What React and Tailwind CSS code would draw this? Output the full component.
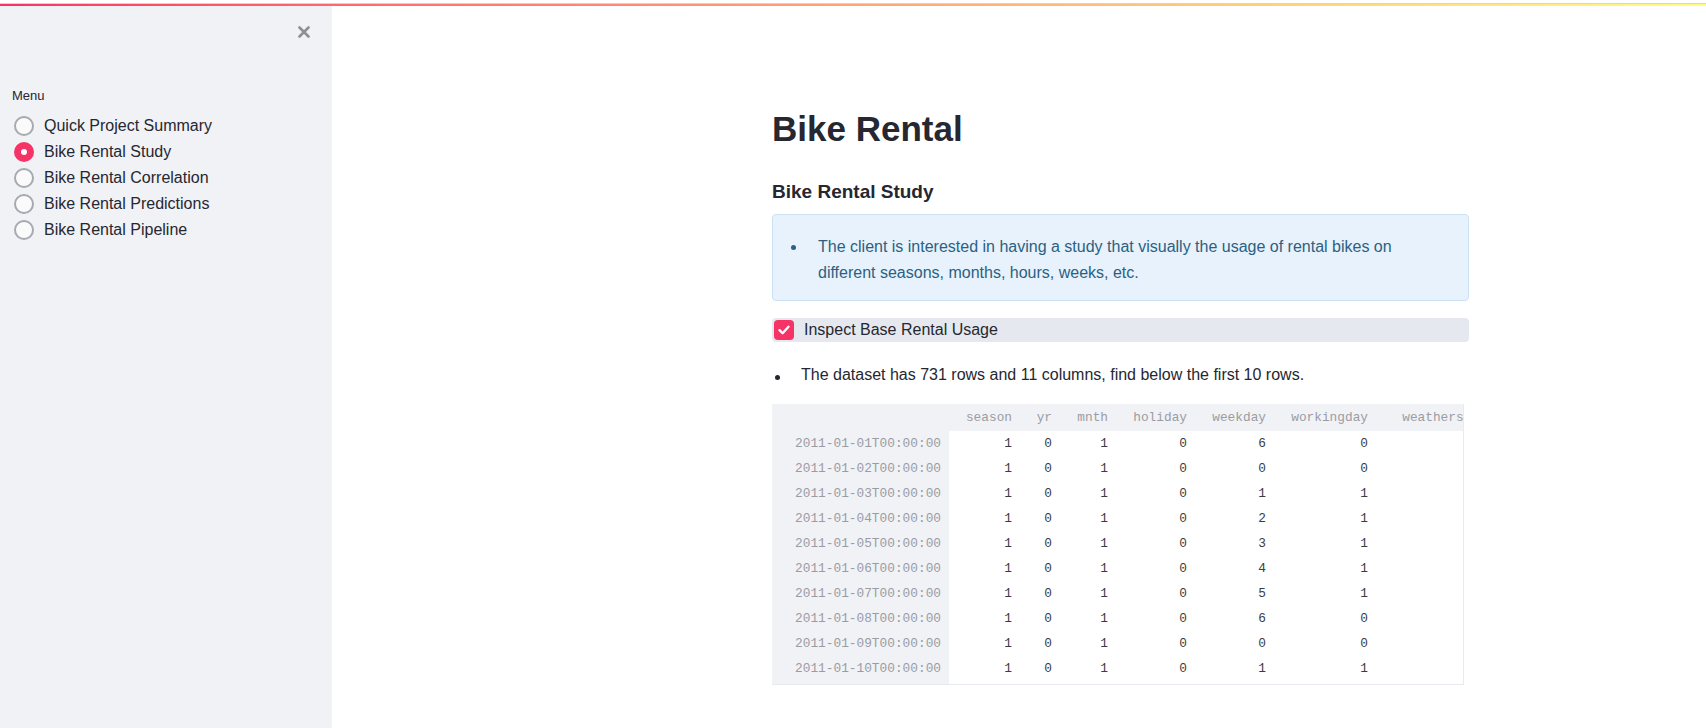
import React from "react";

const rows = [
  ["2011-01-01T00:00:00", 1, 0, 1, 0, 6, 0],
  ["2011-01-02T00:00:00", 1, 0, 1, 0, 0, 0],
  ["2011-01-03T00:00:00", 1, 0, 1, 0, 1, 1],
  ["2011-01-04T00:00:00", 1, 0, 1, 0, 2, 1],
  ["2011-01-05T00:00:00", 1, 0, 1, 0, 3, 1],
  ["2011-01-06T00:00:00", 1, 0, 1, 0, 4, 1],
  ["2011-01-07T00:00:00", 1, 0, 1, 0, 5, 1],
  ["2011-01-08T00:00:00", 1, 0, 1, 0, 6, 0],
  ["2011-01-09T00:00:00", 1, 0, 1, 0, 0, 0],
  ["2011-01-10T00:00:00", 1, 0, 1, 0, 1, 1],
];

const cols = [
  { name: "season", w: "w-[71px]" },
  { name: "yr", w: "w-[40px]" },
  { name: "mnth", w: "w-[56px]" },
  { name: "holiday", w: "w-[79px]" },
  { name: "weekday", w: "w-[79px]" },
  { name: "workingday", w: "w-[102px]" },
  { name: "weathersit", w: "w-[111px]" },
];

const menu = [
  "Quick Project Summary",
  "Bike Rental Study",
  "Bike Rental Correlation",
  "Bike Rental Predictions",
  "Bike Rental Pipeline",
];

function Radio({ checked }) {
  if (checked) {
    return (
      <span className="flex h-[20px] w-[20px] shrink-0 items-center justify-center rounded-full bg-[#f63366]">
        <span className="h-[6px] w-[6px] rounded-full bg-white" />
      </span>
    );
  }
  return (
    <span className="h-[20px] w-[20px] shrink-0 rounded-full border-2 border-[#a6a9b0] bg-[#fafafb]" />
  );
}

export default function App() {
  return (
    <div className="flex h-[728px] w-full flex-col overflow-hidden bg-white font-['Liberation_Sans',Arial,sans-serif] text-[#262730]">
      <div className="h-[3px] bg-white" />
      <div className="h-px bg-[#d4d4d6]" />
      <div className="h-[2px] bg-gradient-to-r from-[#f63366] to-[#fffd80]" />
      <div className="flex min-h-0 flex-1">
        <aside className="w-[332px] shrink-0 bg-[#f0f2f6]">
          <div className="flex justify-end pr-[22px] pt-[20px]">
            <svg width="12" height="12" viewBox="0 0 12 12">
              <path d="M1.5 1.5 L10.5 10.5 M10.5 1.5 L1.5 10.5" stroke="#8c8f96" strokeWidth="2.6" strokeLinecap="round" />
            </svg>
          </div>
          <div className="mt-[50px] pl-[12px] text-[13px] leading-[16px]">Menu</div>
          <div className="mt-[9.5px] flex flex-col">
            {menu.map((m, i) => (
              <div key={m} className="flex h-[25.8px] items-center pl-[14px]">
                <Radio checked={i === 1} />
                <span className="ml-[10px] text-[16px] leading-[20px]">{m}</span>
              </div>
            ))}
          </div>
        </aside>
        <main className="flex-1 pl-[440px] pt-[102px]">
          <div className="w-[697px]">
            <h1 className="text-[35px] font-bold leading-[42px]">Bike Rental</h1>
            <h3 className="mt-[29.5px] text-[19px] font-bold leading-[24px]">Bike Rental Study</h3>
            <div className="mt-[10.5px] rounded-[4px] border border-[#cbe2f6] bg-[#e8f2fc] pb-[14.5px] pl-[17.5px] pt-[18.5px] text-[16px] leading-[26px] text-[#2a6183]">
              <div className="flex">
                <span className="mt-[11.5px] h-[5px] w-[5px] shrink-0 rounded-full bg-[#2a6183]" />
                <p className="ml-[22.5px] pr-[40px]">
                  The client is interested in having a study that visually the usage of rental bikes on different seasons, months, hours, weeks, etc.
                </p>
              </div>
            </div>
            <div className="mt-[17px] flex h-[24px] items-center rounded-[4px] bg-[#e5e9ef] pl-[2px]">
              <span className="flex h-[20px] w-[20px] items-center justify-center rounded-[4px] bg-[#f63366]">
                <svg width="14" height="14" viewBox="0 0 14 14">
                  <path d="M2.5 7.2 L5.6 10.2 L11.5 3.8" fill="none" stroke="white" strokeWidth="2.4" strokeLinecap="round" strokeLinejoin="round" />
                </svg>
              </span>
              <span className="ml-[10px] text-[16px] leading-[20px]">Inspect Base Rental Usage</span>
            </div>
            <div className="mt-[21px] flex pl-[2.5px] text-[16px] leading-[24px]">
              <span className="mt-[12.3px] h-[5px] w-[5px] shrink-0 rounded-full bg-[#262730]" />
              <p className="ml-[21.5px]">The dataset has 731 rows and 11 columns, find below the first 10 rows.</p>
            </div>
            <div className="mt-[17px] w-[692px] overflow-hidden border-b border-r border-[#e8eaef]">
              <table className="w-[715px] table-fixed border-collapse font-['Liberation_Mono',monospace] text-[12.8px]">
                <thead>
                  <tr className="h-[27px] bg-[#f0f2f6] text-[#9a9ca4]">
                    <th className="w-[177px] p-0 font-normal" />
                    {cols.map((c) => (
                      <th key={c.name} className={`${c.w} whitespace-nowrap p-0 pr-[8px] text-right font-normal`}>
                        {c.name}
                      </th>
                    ))}
                  </tr>
                </thead>
                <tbody>
                  {rows.map((r) => (
                    <tr key={r[0]} className="h-[25px]">
                      <th className="bg-[#f0f2f6] p-0 pr-[8px] text-right font-normal text-[#9a9ca4]">{r[0]}</th>
                      {r.slice(1).map((v, j) => (
                        <td key={j} className="whitespace-nowrap p-0 pr-[8px] text-right text-[#3a3c44]">
                          {v}
                        </td>
                      ))}
                      <td className="p-0" />
                    </tr>
                  ))}
                  <tr className="h-[3px]">
                    <th className="bg-[#f0f2f6] p-0" />
                    <td colSpan={7} className="p-0" />
                  </tr>
                </tbody>
              </table>
            </div>
          </div>
        </main>
      </div>
    </div>
  );
}
